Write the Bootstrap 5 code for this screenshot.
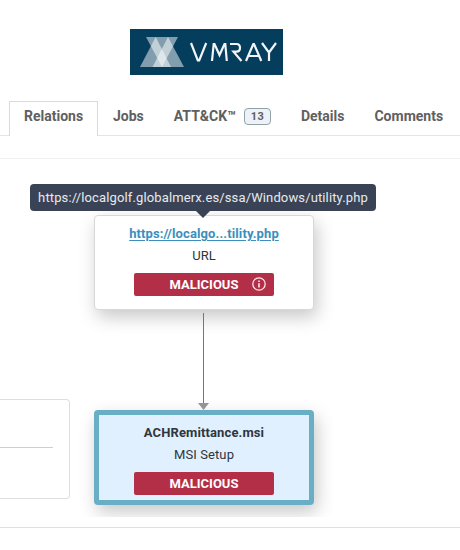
<!DOCTYPE html>
<html lang="en">
<head>
<meta charset="utf-8">
<meta name="viewport" content="width=device-width, initial-scale=1">
<title>VMRay – Relations</title>
<link rel="stylesheet" href="https://cdn.jsdelivr.net/npm/bootstrap@5.3.0/dist/css/bootstrap.min.css">
<style>
body{font-family:Roboto,"Liberation Sans",sans-serif;font-size:14px;line-height:22px;color:#2f363d;width:460px;height:550px;overflow:hidden;background:#fff}
.brand-bar{height:101px;padding:29px 0 0 130px}
.brand-bar svg{display:block}
.tab-strip{height:35px;padding-left:9px;border:0;box-shadow:inset 0 -1px #e1e4ee}
.tab-strip .nav-link{height:35px;margin:0;padding:0 15px;border:0;border-radius:0;color:#606060;font-weight:700;line-height:31px;white-space:nowrap;position:static}
.tab-strip .nav-link.active{width:89px;padding:0 0 0 14px;border:1px solid #d6dae5;border-bottom:0;color:#606060;background:#fff;line-height:29px}
.tab-strip .nav-link.with-count{height:31px}
.count-pill{width:27px;height:17px;margin-left:8px;padding:0;border:1px solid #90a4a6;border-radius:4px;background:#eef1f9;color:#606060;font-size:11px;line-height:16px;letter-spacing:.3px}
.sub-bar{height:23px;border-bottom:1px solid #f1f1f3}
.graph-area{height:358px;overflow:hidden}
.side-col{width:94px;padding-top:240px}
.side-panel{width:70px;height:100px;border:1px solid #dedede;border-left:0;border-radius:0 4px 4px 0;padding:47px 16px 0 0}
.side-panel hr{margin:0;border-top:1px solid #c3d4d7;opacity:1}
.graph-col{width:220px;padding-top:56px}
.graph-node{height:95px;border:1px solid #d8d8da;border-radius:4px;background:#fff;box-shadow:3px 7px 18px rgba(0,0,0,.22);padding-top:6px}
.graph-node.selected{border:5px solid #68aec5;background:#e1f0ff;padding-top:7px}
.node-name{font-weight:700;font-size:13px;letter-spacing:.12px}
.node-link{color:#3b8fbd;text-decoration:underline;text-underline-offset:2px}
.node-kind{font-size:13px;letter-spacing:.1px}
.verdict{width:140px;height:23px;margin-top:6px;border-radius:2px;background:#b32f47;color:#fff;font-weight:700;font-size:13px;line-height:23px}
.verdict svg{position:absolute;right:8px;top:4px}
.edge{display:block;height:100px}
.url-tip{left:-64px;top:25px;width:346px;height:27px;border-radius:4px;background:#3a4356;color:#e8eaee;font-size:13px;letter-spacing:.13px;line-height:27px;z-index:2}
.url-tip::after{content:"";position:absolute;left:166px;top:27px;border:7px solid transparent;border-top-color:#3a4356;border-bottom:0}
.foot-rule{margin-top:10px;border-top:1px solid #dfdfe1}
</style>
</head>
<body>
<header class="brand-bar">
<svg width="153" height="46" viewBox="0 0 153 46" role="img" aria-label="VMRAY">
<rect width="153" height="46" fill="#053d5d"/>
<g fill="#fff" fill-opacity=".5"><path d="M25.700 8L41 38H10Z"/><path d="M38 8L54 38H22.500Z"/><path d="M16 8H48L32 38Z"/></g>
<g fill="none" stroke="#f1f5f7" stroke-width="2.200"><path d="M61 14L67.800 31.500H69.200L76.200 14M82 32L83.700 15H84.500L89.500 26L94.500 15H95.300L96.800 32M100 15H106.500Q110 15 110 18.800T106.500 22.700H103.500L111.500 32M116 32L123.300 15H124L131.300 32M119 27H128.500M132 14L139 23.500V32M139 23.500L146 14"/></g>
</svg>
</header>
<nav class="nav nav-tabs flex-nowrap tab-strip">
<a class="nav-link active" href="#">Relations</a>
<a class="nav-link" href="#">Jobs</a>
<a class="nav-link with-count d-flex align-items-center" href="#">ATT&amp;CK™<span class="badge count-pill">13</span></a>
<a class="nav-link" href="#">Details</a>
<a class="nav-link" href="#">Comments</a>
</nav>
<div class="sub-bar"></div>
<main class="graph-area d-flex">
<aside class="side-col flex-shrink-0"><div class="side-panel"><hr></div></aside>
<section class="graph-col position-relative flex-shrink-0">
<div class="url-tip position-absolute text-center text-nowrap">https://localgolf.globalmerx.es/ssa/Windows/utility.php</div>
<article class="graph-node text-center">
<div><a class="node-name node-link" href="#">https://localgo...tility.php</a></div>
<div class="node-kind">URL</div>
<div class="verdict mx-auto position-relative">MALICIOUS
<svg width="14" height="14" viewBox="0 0 14 14" fill="none" stroke="#f8e8eb" stroke-width="1.300"><circle cx="7" cy="7" r="6.200"/><path d="M7 3.500V5M7 6.200V10.500" stroke-width="1.600"/></svg></div>
</article>
<svg class="edge" width="220" height="100"><path d="M109.500 3V94" stroke="#ab682f"/><path d="M104 93H115L109.500 100Z" fill="#949494"/></svg>
<article class="graph-node selected text-center">
<div class="node-name">ACHRemittance.msi</div>
<div class="node-kind">MSI Setup</div>
<div class="verdict mx-auto">MALICIOUS</div>
</article>
</section>
</main>
<div class="foot-rule"></div>
<script src="https://cdn.jsdelivr.net/npm/bootstrap@5.3.0/dist/js/bootstrap.bundle.min.js"></script>
</body>
</html>
